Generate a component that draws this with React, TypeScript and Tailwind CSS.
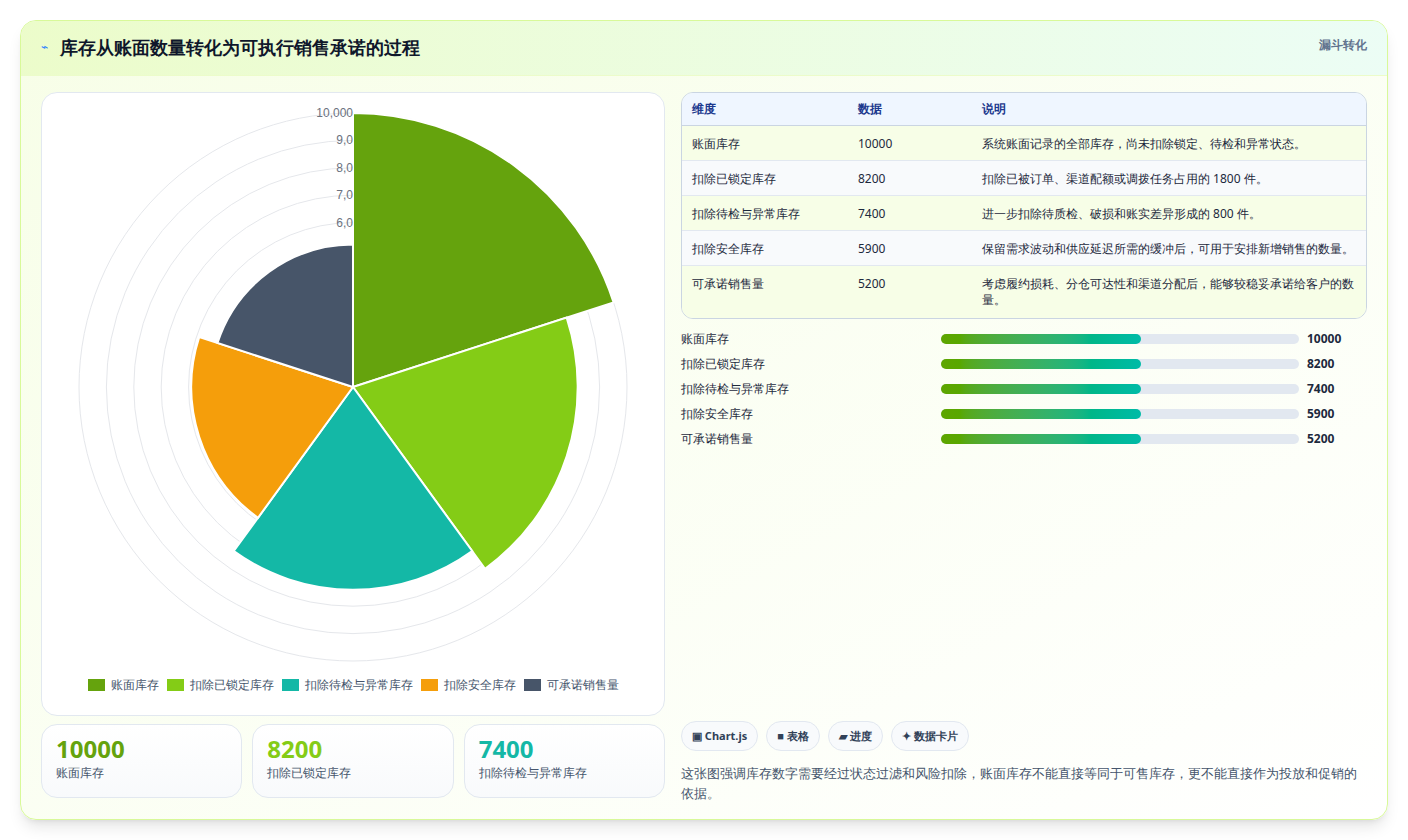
import React from 'react';

const items = [
  { name: '账面库存', value: 10000, color: '#65a30d', desc: '系统账面记录的全部库存，尚未扣除锁定、待检和异常状态。' },
  { name: '扣除已锁定库存', value: 8200, color: '#84cc16', desc: '扣除已被订单、渠道配额或调拨任务占用的 1800 件。' },
  { name: '扣除待检与异常库存', value: 7400, color: '#14b8a6', desc: '进一步扣除待质检、破损和账实差异形成的 800 件。' },
  { name: '扣除安全库存', value: 5900, color: '#f59e0b', desc: '保留需求波动和供应延迟所需的缓冲后，可用于安排新增销售的数量。' },
  { name: '可承诺销售量', value: 5200, color: '#475569', desc: '考虑履约损耗、分仓可达性和渠道分配后，能够较稳妥承诺给客户的数量。' },
];

const Polar: React.FC = () => {
  const cx = 311, cy = 294, k = 0.0274;
  const pt = (r: number, a: number) => [cx + r * Math.cos(a), cy + r * Math.sin(a)];
  return (
    <svg width="622" height="580" className="block">
      {[1, 2, 3, 4, 5, 6, 7, 8, 9, 10].map((i) => (
        <circle key={i} cx={cx} cy={cy} r={i * 1000 * k} fill="none" stroke="#e5e7eb" strokeWidth="1" />
      ))}
      {items.map((it, i) => {
        const r = it.value * k;
        const a0 = -Math.PI / 2 + (i * 2 * Math.PI) / 5;
        const a1 = a0 + (2 * Math.PI) / 5;
        const [x0, y0] = pt(r, a0);
        const [x1, y1] = pt(r, a1);
        return (
          <path key={i} d={`M${cx},${cy} L${x0},${y0} A${r},${r} 0 0 1 ${x1},${y1} Z`} fill={it.color} stroke="#fff" strokeWidth="2" />
        );
      })}
      {[6, 7, 8, 9, 10].map((i) => (
        <text key={i} x={cx} y={cy - i * 1000 * k + 4} textAnchor="end" fontSize="12" fill="#6b7280" fontFamily="Liberation Sans, sans-serif">
          {i === 10 ? '10,000' : `${i},0`}
        </text>
      ))}
    </svg>
  );
};

const App: React.FC = () => {
  return (
    <div className="w-[1408px] h-[840px] bg-white p-5 pb-5 font-['Noto_Sans_CJK_SC',sans-serif]">
      <div className="h-[800px] rounded-2xl border border-lime-200 bg-gradient-to-br from-lime-50 to-white shadow-lg flex flex-col overflow-hidden">
        <div className="h-[55px] flex items-start justify-between px-5 pt-3 bg-gradient-to-r from-lime-100 to-emerald-50 border-b border-lime-100">
          <div className="flex items-center gap-3">
            <span className="text-blue-500 text-xs">⌁</span>
            <h1 className="text-lg font-bold text-slate-900">库存从账面数量转化为可执行销售承诺的过程</h1>
          </div>
          <span className="text-xs font-bold text-slate-500 pt-1">漏斗转化</span>
        </div>
        <div className="flex-1 flex gap-4 px-5 pt-4 pb-4">
          <div className="w-[624px] flex flex-col gap-2">
            <div className="h-[624px] rounded-2xl border border-slate-200 bg-white flex flex-col">
              <div className="pt-0"><Polar /></div>
              <div className="flex justify-center gap-2 text-xs text-slate-600 mt-[4px]">
                {items.map((it) => (
                  <div key={it.name} className="flex items-center gap-1.5">
                    <span className="w-[17px] h-[12px] inline-block" style={{ background: it.color }} />
                    {it.name}
                  </div>
                ))}
              </div>
            </div>
            <div className="grid grid-cols-3 gap-2.5">
              {items.slice(0, 3).map((it) => (
                <div key={it.name} className="h-[74px] rounded-2xl border border-slate-200 bg-gradient-to-b from-white to-slate-50 px-3.5 pt-2">
                  <div className="text-2xl font-bold" style={{ color: it.color }}>{it.value}</div>
                  <div className="text-xs text-slate-600">{it.name}</div>
                </div>
              ))}
            </div>
          </div>
          <div className="flex-1 flex flex-col">
            <div className="rounded-xl border border-slate-300 overflow-hidden text-xs">
              <div className="grid grid-cols-[166px_124px_1fr] h-[33px] items-center px-2.5 bg-blue-50 text-blue-900 font-bold border-b border-slate-300">
                <span>维度</span><span>数据</span><span>说明</span>
              </div>
              {items.map((it, i) => (
                <div key={it.name} className={`grid grid-cols-[166px_124px_1fr] items-start px-2.5 py-2.5 text-slate-800 ${i % 2 ? 'bg-slate-50' : 'bg-lime-50'} ${i < 4 ? 'border-b border-slate-200 h-[35px]' : ''}`}>
                  <span>{it.name}</span><span>{it.value}</span><span>{it.desc}</span>
                </div>
              ))}
            </div>
            <div className="flex flex-col gap-[9px] mt-3 text-xs text-slate-800">
              {items.map((it) => (
                <div key={it.name} className="flex items-center h-4">
                  <span className="w-[260px]">{it.name}</span>
                  <div className="w-[358px] h-[10px] rounded-full bg-slate-200">
                    <div className="h-full w-[56%] rounded-full bg-gradient-to-r from-lime-600 to-teal-500" />
                  </div>
                  <span className="ml-2 font-bold">{it.value}</span>
                </div>
              ))}
            </div>
            <div className="flex-1" />
            <div className="flex gap-2 text-[11px] font-bold text-slate-700">
              {['▣ Chart.js', '■ 表格', '▰ 进度', '✦ 数据卡片'].map((t) => (
                <span key={t} className="px-2.5 py-1.5 rounded-full border border-slate-200 bg-slate-50">{t}</span>
              ))}
            </div>
            <p className="mt-3 text-[13px] leading-5 text-slate-600">这张图强调库存数字需要经过状态过滤和风险扣除，账面库存不能直接等同于可售库存，更不能直接作为投放和促销的依据。</p>
          </div>
        </div>
      </div>
    </div>
  );
};

export default App;
